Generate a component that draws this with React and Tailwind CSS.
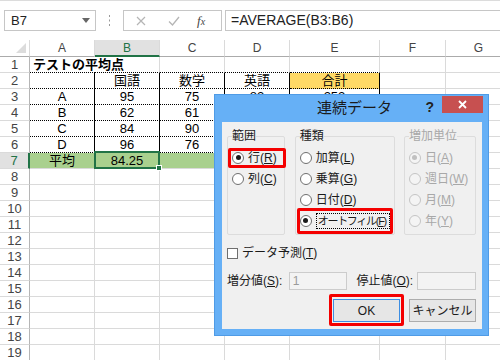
import React from 'react';

const FONT = { fontFamily: '"Liberation Sans", "Noto Sans CJK JP", sans-serif' };

const COLS = ['A', 'B', 'C', 'D', 'E', 'F', 'G'];
const ROWS = Array.from({ length: 19 }, (_, i) => i + 1);

// D4:E6 sit under the dialog, so they are left empty
const data = {
    1: { A: 'テストの平均点' },
    2: { B: '国語', C: '数学', D: '英語', E: '合計' },
    3: { A: 'A', B: '95', C: '75', D: '82', E: '252' },
    4: { A: 'B', B: '62', C: '61' },
    5: { A: 'C', B: '84', C: '90' },
    6: { A: 'D', B: '96', C: '76' },
    7: { A: '平均', B: '84.25' },
};

function cellClass(r, c) {
    const inTable = 'ABCDE'.includes(c);
    if (r === 1 && c === 'A') return 'justify-start pl-[3px] font-bold border-b border-b-black [border-bottom-style:dotted]!';
    if (r === 1 && inTable) return 'justify-center border-r border-b border-r-[#dadada] border-b-black [border-bottom-style:dotted]!';
    if (r === 2 && c === 'E') return 'justify-center bg-[#ffd966] border-r border-b border-r-black border-b-black [border-bottom-style:dotted]!';
    if (r >= 2 && r <= 6 && inTable) return 'justify-center border-r border-b border-r-black border-b-black [border-bottom-style:dotted]!';
    if (r === 7 && inTable) return 'justify-center bg-[#a9d08e] border-r border-b border-r-[#a9d08e] border-b-[#dadada]';
    return 'justify-center border-r border-b border-[#dadada]';
}

function FormulaBar() {
    return (
        <div className="h-[40px] border-t border-[#dcdcdc] flex items-start pt-[9px] bg-white">
            <div className="ml-[4px] w-[92px] h-[21px] border border-[#c6c6c6] flex items-center justify-between pl-[6px] pr-[5px]">
                <span className="text-[13px] text-[#222]">B7</span>
                <svg width="8" height="5" viewBox="0 0 8 5"><path d="M0 0h8L4 5z" fill="#666" /></svg>
            </div>
            <div className="w-[27px] h-[21px] flex items-center justify-center">
                <svg width="3" height="11" viewBox="0 0 3 11">
                    <rect x="1" y="0" width="1" height="2" fill="#9a9a9a" />
                    <rect x="1" y="4.5" width="1" height="2" fill="#9a9a9a" />
                    <rect x="1" y="9" width="1" height="2" fill="#9a9a9a" />
                </svg>
            </div>
            <div className="w-[99px] h-[21px] border border-[#c6c6c6] flex items-center">
                <svg className="ml-[12px]" width="10" height="10" viewBox="0 0 10 10">
                    <path d="M1 1l8 8M9 1l-8 8" stroke="#b5b5b5" strokeWidth="1.2" />
                </svg>
                <svg className="ml-[22px]" width="12" height="10" viewBox="0 0 12 10">
                    <path d="M1 5.5l3.5 3.5L11 1" stroke="#b5b5b5" strokeWidth="1.3" fill="none" />
                </svg>
                <span className="ml-[17px] text-[13px] italic text-[#444]" style={{ fontFamily: '"Liberation Serif", serif' }}>
                    f<span className="text-[10px]">x</span>
                </span>
            </div>
            <div className="ml-[3px] flex-1 h-[21px] border border-r-0 border-[#c6c6c6] flex items-center pl-[5px]">
                <span className="text-[14px] text-[#222]">=AVERAGE(B3:B6)</span>
            </div>
        </div>
    );
}

function Sheet() {
    return (
        <div className="grid grid-cols-[30px_65px_65px_65px_65px_90px_66px_66px]">
            <div className="h-[17px] border-r border-b border-r-[#dadada] border-b-[#ababab] flex items-end justify-end pr-[3px] pb-[3px]">
                <svg width="10" height="10" viewBox="0 0 10 10"><path d="M10 0v10H0z" fill="#dcdcdc" /></svg>
            </div>
            {COLS.map(c => (
                <div
                    key={c}
                    className={c === 'B'
                        ? 'h-[17px] flex items-center justify-center bg-[#e1e1e1] text-[#217346] text-[12px] border-r border-r-[#dadada] border-b-2 border-b-[#217346]'
                        : 'h-[17px] flex items-center justify-center text-[#444] text-[12px] border-r border-b border-r-[#dadada] border-b-[#ababab]'}
                >
                    {c}
                </div>
            ))}
            {ROWS.map(r => (
                <React.Fragment key={r}>
                    <div
                        className={r === 7
                            ? 'h-[16px] flex items-center justify-center bg-[#e1e1e1] text-[#217346] text-[13px] border-r-2 border-b border-r-[#217346] border-b-[#dadada]'
                            : 'h-[16px] flex items-center justify-center text-[#444] text-[13px] border-r border-b border-r-[#b5b5b5] border-b-[#dadada]'}
                    >
                        {r}
                    </div>
                    {COLS.map(c => (
                        <div key={c} className={'relative h-[16px] flex items-center whitespace-nowrap text-[13px] text-black ' + cellClass(r, c)}>
                            {data[r] && data[r][c]}
                            {r === 7 && c === 'B' && (
                                <>
                                    <div className="absolute -left-[1px] -top-[2px] -right-[1px] -bottom-[1px] border-2 border-[#217346] z-10" />
                                    <div className="absolute -right-[3px] -bottom-[3px] w-[6px] h-[6px] bg-[#217346] border border-white z-10" />
                                </>
                            )}
                        </div>
                    ))}
                </React.Fragment>
            ))}
        </div>
    );
}

function Radio({ checked, disabled }) {
    return (
        <span className={disabled
            ? 'w-[12px] h-[12px] rounded-full border border-[#c4c4c4] bg-[#f4f4f4] flex items-center justify-center shrink-0'
            : 'w-[12px] h-[12px] rounded-full border border-[#6f6f6f] bg-white flex items-center justify-center shrink-0'}>
            {checked && <span className={disabled ? 'w-[5px] h-[5px] rounded-full bg-[#c0c0c0]' : 'w-[5px] h-[5px] rounded-full bg-[#1a1a1a]'} />}
        </span>
    );
}

function Option({ label, keyChar, checked, disabled, focus }) {
    return (
        <div className={disabled ? 'h-[21px] flex items-center gap-[4px] whitespace-nowrap text-[#a8a8a8]' : 'h-[21px] flex items-center gap-[4px] whitespace-nowrap text-[#1a1a1a]'}>
            <Radio checked={checked} disabled={disabled} />
            {focus ? (
                <span className="border border-dotted border-black leading-[14px] text-[11px] tracking-[-1.3px] pl-px pr-[3px]">
                    {label}(<u>{keyChar}</u>)
                </span>
            ) : (
                <span className="leading-[14px]">
                    {label}(<u>{keyChar}</u>)
                </span>
            )}
        </div>
    );
}

function Group({ title, width, disabled, children }) {
    return (
        <fieldset className={'h-[106px] border border-[#dcdcdc] rounded-[2px] px-[4px] pt-[4px] ' + width}>
            <legend className={disabled ? 'text-[12px] leading-[14px] text-[#a8a8a8]' : 'text-[12px] leading-[14px] text-[#1a1a1a]'}>{title}</legend>
            {children}
        </fieldset>
    );
}

function SeriesDialog() {
    return (
        <div className="absolute left-[214px] top-[94px] w-[275px] h-[242px] bg-[#66b0f6] border border-[#4f9be6] flex flex-col z-20">
            <div className="relative h-[27px] flex items-center justify-center">
                <span className="text-[15px] text-[#1a1a1a] pl-[6px]">連続データ</span>
                <div className="absolute right-[5px] top-[1px] flex items-start">
                    <span className="text-[14px] font-bold text-[#222] mt-[1px] mr-[8px]">?</span>
                    <div className="w-[41px] h-[17px] bg-[#c75050] flex items-center justify-center">
                        <svg width="9" height="9" viewBox="0 0 9 9">
                            <path d="M1 1l7 7M8 1l-7 7" stroke="white" strokeWidth="1.8" />
                        </svg>
                    </div>
                </div>
            </div>
            <div className="relative flex-1 ml-[7px] mr-[6px] mb-[6px] bg-[#f0f0f0] pl-[5px] pr-[6px] pt-[7px] text-[12px]">
                <div className="flex gap-[9px]">
                    <Group title="範囲" width="w-[60px] mr-[1px]">
                        <Option label="行" keyChar="R" checked />
                        <Option label="列" keyChar="C" />
                    </Group>
                    <Group title="種類" width="w-[95px]">
                        <Option label="加算" keyChar="L" />
                        <Option label="乗算" keyChar="G" />
                        <Option label="日付" keyChar="D" />
                        <Option label="オートフィル" keyChar="F" checked focus />
                    </Group>
                    <Group title="増加単位" width="w-[75px]" disabled>
                        <Option label="日" keyChar="A" checked disabled />
                        <Option label="週日" keyChar="W" disabled />
                        <Option label="月" keyChar="M" disabled />
                        <Option label="年" keyChar="Y" disabled />
                    </Group>
                </div>
                <div className="mt-[10px] h-[16px] flex items-center gap-[4px] text-[#1a1a1a]">
                    <span className="w-[11px] h-[11px] border border-[#6f6f6f] bg-white" />
                    <span>データ予測(<u>T</u>)</span>
                </div>
                <div className="mt-[11px] h-[18px] flex items-center text-[#1a1a1a]">
                    <span className="w-[62px]">増分値(<u>S</u>):</span>
                    <div className="w-[58px] h-[18px] border border-[#cccccc] bg-[#f3f3f3] flex items-center pl-[3px] text-[#9a9a9a]">1</div>
                    <span className="ml-[10px] w-[61px]">停止値(<u>O</u>):</span>
                    <div className="w-[59px] h-[18px] border border-[#cccccc] bg-[#f3f3f3]" />
                </div>
                <div className="mt-[9px] flex justify-end gap-[9px]">
                    <button className="w-[67px] h-[23px] border border-[#3d8ee2] bg-[#e6e6e6] text-[12px] text-[#1a1a1a]">OK</button>
                    <button className="w-[67px] h-[23px] border border-[#adadad] bg-[#e6e6e6] text-[12px] text-[#1a1a1a]">キャンセル</button>
                </div>
                <div className="absolute left-[6px] top-[26px] w-[58px] h-[20px] border-[3px] border-[#f40000] rounded-[2px]" />
                <div className="absolute left-[75px] top-[86px] w-[96px] h-[26px] border-[3px] border-[#f40000] rounded-[2px]" />
                <div className="absolute left-[107px] top-[172px] w-[75px] h-[32px] border-[3px] border-[#f40000] rounded-[2px]" />
            </div>
        </div>
    );
}

export default function App() {
    return (
        <div className="relative w-[500px] h-[360px] overflow-hidden bg-white" style={FONT}>
            <FormulaBar />
            <Sheet />
            <SeriesDialog />
        </div>
    );
}
